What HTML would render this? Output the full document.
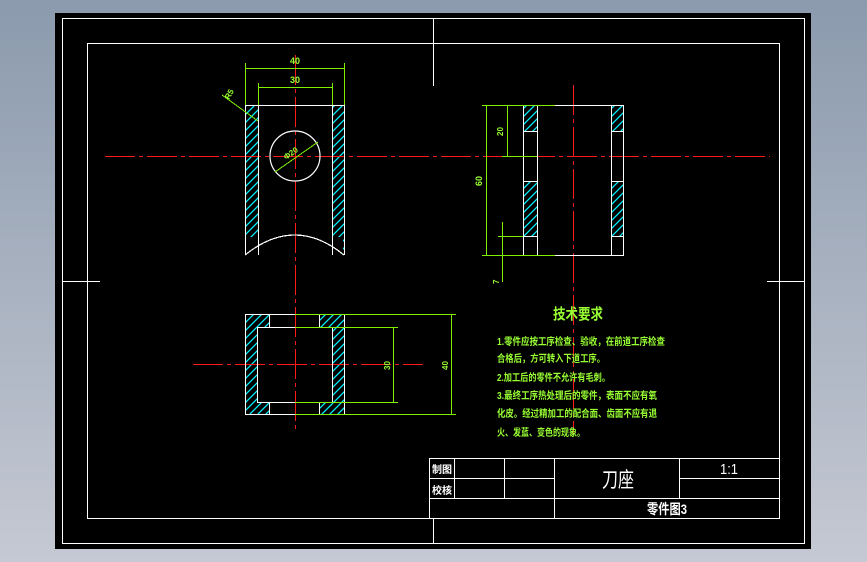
<!DOCTYPE html>
<html><head><meta charset="utf-8"><style>
html,body{margin:0;padding:0;}
body{width:867px;height:562px;overflow:hidden;background:linear-gradient(#8b9aad,#c5c9d3);}
svg{position:absolute;left:0;top:0;}
text{font-family:"Liberation Sans","Noto Sans CJK SC",sans-serif;}
</style></head><body>
<svg width="867" height="562" viewBox="0 0 867 562" shape-rendering="crispEdges">
<defs>
<pattern id="h" patternUnits="userSpaceOnUse" width="8" height="8">
<path d="M0 8L8 0M-2 2L2 -2M6 10L10 6" stroke="#00f0ff" stroke-width="1.3" shape-rendering="auto"/>
</pattern>
</defs>
<rect x="55" y="13" width="756" height="536" fill="#000"/>
<g fill="none" stroke="#fff" stroke-width="1.3">
<rect x="62.5" y="18.5" width="742" height="525"/>
<rect x="87.5" y="43.5" width="692" height="475"/>
<path d="M433.5 18v68M433.5 518v25M62 281.5h38M767 281.5h37"/>
<path d="M429.5 458v60M429 458.5h350M429 478.5h125M429 498.5h350M454.5 458v40M504.5 458v40M554.5 458v60M679.5 458v40M679 478.5h100"/>
</g>
<g fill="url(#h)">
<rect x="245" y="105" width="13" height="150"/>
<rect x="332" y="105" width="12" height="150"/>
<rect x="523" y="105" width="14" height="26"/>
<rect x="523" y="181" width="14" height="55"/>
<rect x="611" y="105" width="12" height="26"/>
<rect x="611" y="181" width="12" height="55"/>
<rect x="245" y="314" width="12" height="100"/>
<rect x="257" y="314" width="12" height="13"/>
<rect x="257" y="402" width="12" height="12"/>
<rect x="319" y="314" width="25" height="13"/>
<rect x="332" y="327" width="12" height="75"/>
<rect x="319" y="402" width="25" height="12"/>
</g>
<rect x="246" y="237" width="97" height="19" fill="#000"/>
<g stroke="#ff1a1a" stroke-width="1.2" stroke-dasharray="30 4 4 4" fill="none">
<path d="M105 156.5h665"/>
<path d="M295.5 55v375"/>
<path d="M573.5 85v350"/>
<path d="M193 364.5h230"/>
</g>
<g fill="none" stroke="#fff" stroke-width="1.2">
<path d="M245.5 105v150M344.5 105v150M245 105.5h99M258.5 105v150M332.5 105v150"/>
<path d="M245 255Q295 215 344 255"/>
<circle cx="295" cy="156" r="25" shape-rendering="auto"/>
<rect x="523.5" y="105.5" width="100" height="150"/>
<path d="M537.5 105v150M611.5 105v150M523 131.5h14M523 181.5h14M523 236.5h14M611 131.5h12M611 181.5h12M611 236.5h12"/>
<rect x="245.5" y="314.5" width="99" height="100"/>
<rect x="257.5" y="327.5" width="75" height="75"/>
<path d="M269.5 314v13M319.5 314v13M269.5 402v12M319.5 402v12"/>
</g>
<g fill="none" stroke="#80f000" stroke-width="1">
<path d="M245.5 63v42M344.5 63v42M245 68.5h99M258.5 83v22M332.5 83v22M258 87.5h74"/>
<path d="M222 95L258 121"/>
<path d="M275 172L318 142"/>
<path d="M482 105.5h73M482 255.5h73M486.5 105v150M502 156.5h35M507.5 105v51M502.5 222v60M498 236.5h25"/>
<path d="M295 314.5h161M295 414.5h161M295 327.5h103M295 402.5h103M393.5 327v75M451.5 314v100"/>
</g>
<g fill="#9f3" font-weight="bold">
<text x="295" y="64" font-size="9" text-anchor="middle">40</text>
<text x="295" y="83" font-size="9" text-anchor="middle">30</text>
<text x="229" y="100" font-size="8" transform="rotate(-60 229 100)">R5</text>
<text x="286" y="160" font-size="8" transform="rotate(-35 286 160)">Φ20</text>
<text x="503" y="136" font-size="8" transform="rotate(-90 503 136)">20</text>
<text x="482" y="186" font-size="9" transform="rotate(-90 482 186)">60</text>
<text x="499" y="284" font-size="8" transform="rotate(-90 499 284)">7</text>
<text x="390" y="370" font-size="8" transform="rotate(-90 390 370)">30</text>
<text x="448" y="370" font-size="8" transform="rotate(-90 448 370)">40</text>
<text x="553" y="319" font-size="15" textLength="50" lengthAdjust="spacingAndGlyphs">技术要求</text>
<g font-size="10">
<text x="497" y="345" textLength="168" lengthAdjust="spacingAndGlyphs">1.零件应按工序检查、验收，在前道工序检查</text>
<text x="497" y="362" textLength="108" lengthAdjust="spacingAndGlyphs">合格后，方可转入下道工序。</text>
<text x="497" y="381" textLength="113" lengthAdjust="spacingAndGlyphs">2.加工后的零件不允许有毛刺。</text>
<text x="497" y="399" textLength="160" lengthAdjust="spacingAndGlyphs">3.最终工序热处理后的零件，表面不应有氧</text>
<text x="497" y="417" textLength="160" lengthAdjust="spacingAndGlyphs">化皮。经过精加工的配合面、齿面不应有退</text>
<text x="497" y="436" textLength="88" lengthAdjust="spacingAndGlyphs">火、发蓝、变色的现象。</text>
</g>
</g>
<g fill="#fff">
<text x="432" y="473" font-size="10" font-weight="bold" textLength="20" lengthAdjust="spacingAndGlyphs">制图</text>
<text x="432" y="494" font-size="10" font-weight="bold" textLength="20" lengthAdjust="spacingAndGlyphs">校核</text>
<text x="602" y="487" font-size="21" textLength="32" lengthAdjust="spacingAndGlyphs">刀座</text>
<text x="720" y="474" font-size="15" textLength="18" lengthAdjust="spacingAndGlyphs">1:1</text>
<text x="647" y="514" font-size="14" font-weight="bold" textLength="40" lengthAdjust="spacingAndGlyphs">零件图3</text>
</g>
</svg>
</body></html>
